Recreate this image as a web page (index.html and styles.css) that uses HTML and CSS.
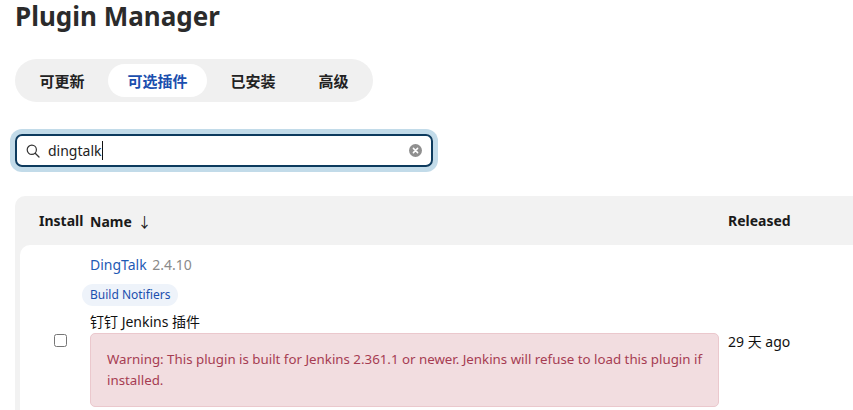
FILE: index.html
```html
<!DOCTYPE html>
<html lang="zh-CN">
<head>
  <meta charset="UTF-8" />
  <meta name="viewport" content="width=device-width, initial-scale=1.0"/>
  <title>Plugin Manager</title>
  <link rel="stylesheet" href="styles.css">
</head>
<body>

  <h1 class="titulo">Plugin Manager</h1>

  <div class="tabs">
    <a class="tab" href="#">可更新</a>
    <a class="tab activo" href="#">可选插件</a>
    <a class="tab" href="#">已安装</a>
    <a class="tab" href="#">高级</a>
  </div>

  <div class="buscador">
    <svg class="lupa" width="14" height="14" viewBox="0 0 14 14">
      <circle cx="5.8" cy="5.8" r="4.6" fill="none" stroke="#333" stroke-width="1.2"/>
      <line x1="9.2" y1="9.2" x2="13" y2="13" stroke="#333" stroke-width="1.3" stroke-linecap="round"/>
    </svg>
    <span class="texto-busqueda">dingtalk<span class="cursor"></span></span>
    <svg class="limpiar" width="13" height="13" viewBox="0 0 13 13">
      <circle cx="6.5" cy="6.5" r="6.5" fill="#8f8f8f"/>
      <path d="M4.4 4.4 L8.6 8.6 M8.6 4.4 L4.4 8.6" stroke="#fff" stroke-width="1.5" stroke-linecap="round"/>
    </svg>
  </div>

  <div class="tabla">
    <div class="encabezado">
      <div class="col-install">Install</div>
      <div class="col-nombre">Name <span class="flecha">↓</span></div>
      <div class="col-fecha">Released</div>
    </div>

    <div class="fila">
      <div class="col-install celda-check"><input type="checkbox" /></div>
      <div class="col-nombre">
        <div class="plugin-titulo"><a href="#">DingTalk</a> <span class="version">2.4.10</span></div>
        <span class="etiqueta">Build Notifiers</span>
        <div class="descripcion">钉钉 Jenkins 插件</div>
        <div class="alerta">Warning: This plugin is built for Jenkins 2.361.1 or newer. Jenkins will refuse to load this plugin if installed.</div>
      </div>
      <div class="col-fecha celda-fecha">29 天 ago</div>
    </div>
  </div>

</body>
</html>
```

FILE: styles.css
```css
/* Administrador de plugins, estilo Jenkins */
body {
  font-family: "Noto Sans", "Noto Sans CJK SC", sans-serif;
  margin: 0;
  padding: 0 0 0 15px;
  color: #1f1f1f;
  background: white;
  font-size: 14px;
  overflow: hidden;
}

.titulo {
  font-size: 26px;
  font-weight: 700;
  color: #2b2b2b;
  margin: 0;
  padding-top: 1px;
  line-height: 30px;
}

.tabs {
  display: inline-flex;
  gap: 4px;
  background: #f0f0f0;
  padding: 5px;
  border-radius: 22px;
  margin-top: 28px;
}

.tab {
  padding: 0 19.5px;
  height: 33px;
  line-height: 33px;
  border-radius: 17px;
  color: #222;
  font-weight: 700;
  text-decoration: none;
  font-family: "Noto Sans CJK SC", sans-serif;
  font-size: 15px;
}

.tab.activo {
  background: white;
  color: #1b4fae;
}

.buscador {
  margin-top: 32px;
  height: 29px;
  border: 2px solid #0d3b5e;
  border-radius: 7px;
  box-shadow: 0 0 0 5px #c2dbe9;
  display: flex;
  align-items: center;
  padding: 0 0 0 9px;
  box-sizing: content-box;
  width: 405px;
}

.lupa {
  flex-shrink: 0;
}

.texto-busqueda {
  margin-left: 8px;
  flex: 1;
  font-size: 14px;
  color: #222;
  display: flex;
  align-items: center;
}

.cursor {
  display: inline-block;
  width: 1px;
  height: 19px;
  background: #111;
  margin-left: 1px;
}

.limpiar {
  margin-right: 9px;
}

.tabla {
  margin-top: 29px;
  background: #f2f2f2;
  border-radius: 10px 0 0 0;
  padding: 0 0 0 5px;
  width: 900px;
}

.encabezado,
.fila {
  display: grid;
  grid-template-columns: 70px 638px 150px;
}

.encabezado {
  height: 49px;
  align-items: center;
  font-weight: 700;
  color: #1a1a1a;
}

.encabezado .col-install {
  padding-left: 19px;
}

.flecha {
  margin-left: 2px;
  font-weight: 400;
}

.fila {
  background: white;
  border-radius: 10px 0 0 0;
}

.celda-check {
  display: flex;
  align-items: center;
  padding-left: 34px;
}

.celda-check input {
  width: 13px;
  height: 13px;
  margin: 0;
}

.col-nombre {
  padding-right: 9px;
}

.fila .col-nombre {
  padding-top: 9px;
  padding-bottom: 29px;
}

.plugin-titulo {
  line-height: 21px;
}

.plugin-titulo a {
  color: #1f5bb5;
  text-decoration: none;
}

.version {
  color: #8a8a8a;
  margin-left: 2px;
}

.etiqueta {
  display: inline-block;
  margin: 9px 0 0 -8px;
  padding: 0 8px;
  height: 22px;
  line-height: 22px;
  border-radius: 11px;
  background: #eef3fa;
  color: #1b4fae;
  font-size: 12px;
}

.descripcion {
  margin-top: 6px;
  line-height: 20px;
  color: #111;
}

.alerta {
  margin-top: 1px;
  background: #f2dde0;
  border: 1px solid #ebc8cd;
  border-radius: 5px;
  padding: 15px 16px;
  color: #a63c52;
  font-size: 13.3px;
  line-height: 21px;
}

.celda-fecha {
  display: flex;
  align-items: center;
  color: #111;
}
```
